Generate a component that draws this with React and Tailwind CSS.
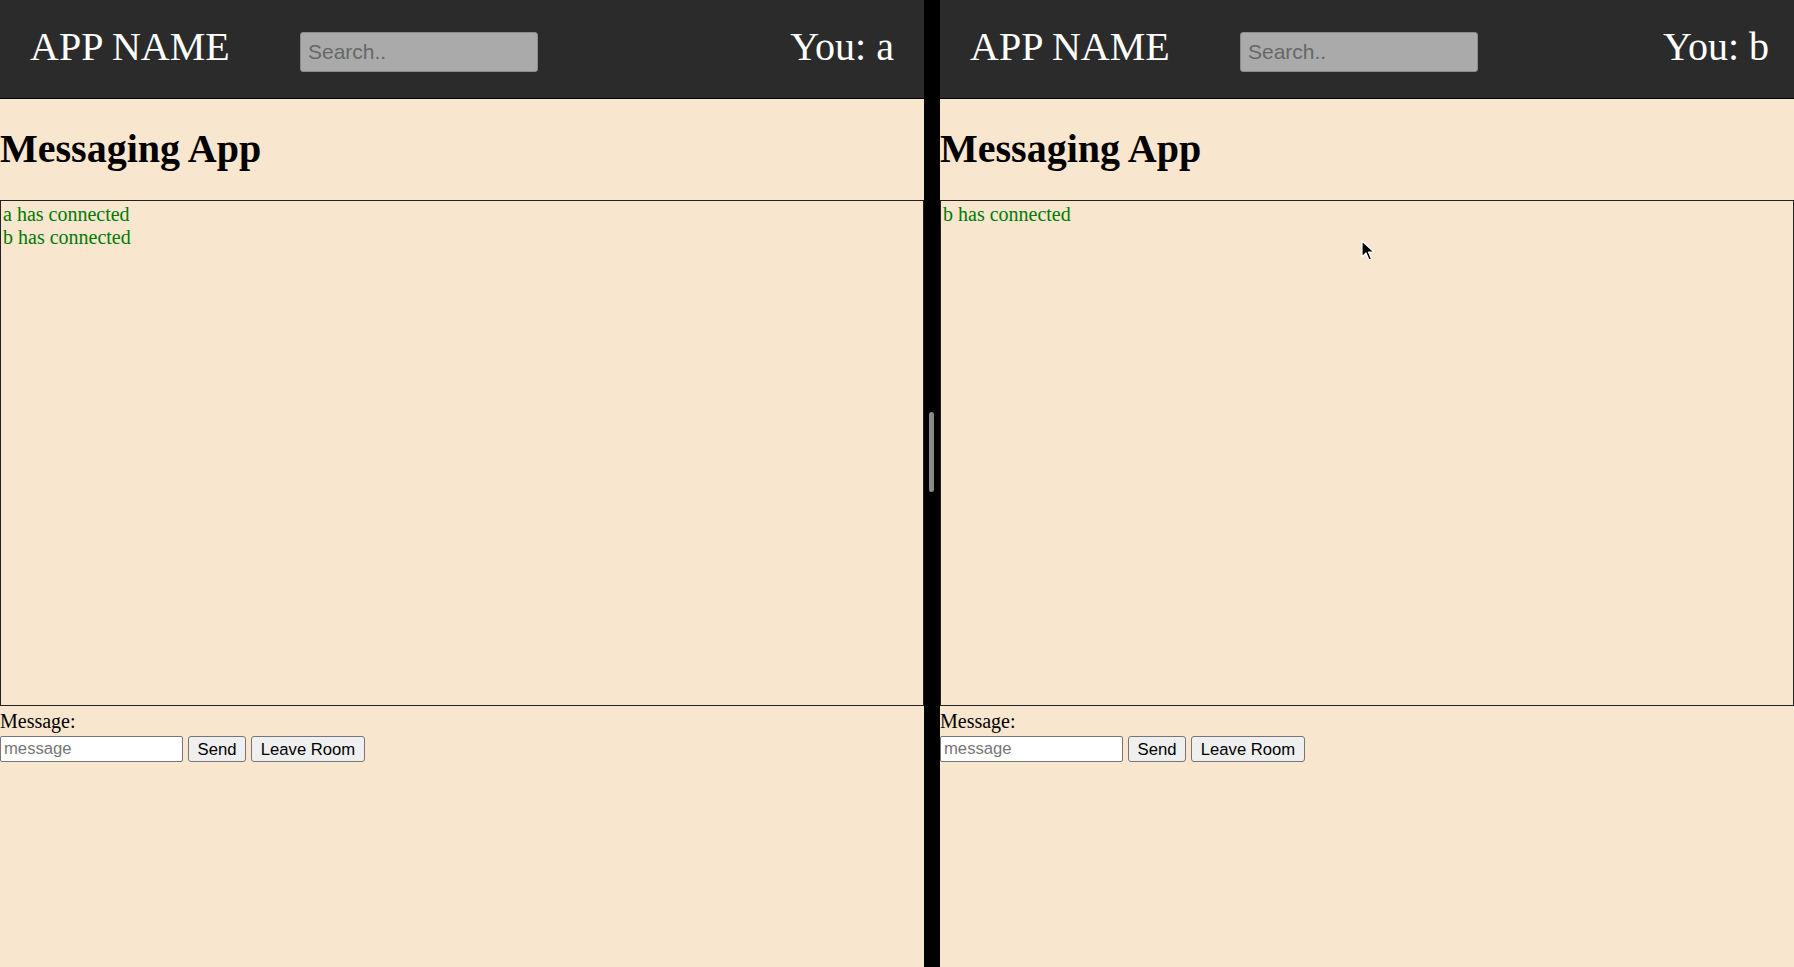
const serif = { fontFamily: '"Liberation Serif", "Times New Roman", serif' };

function Pane({ user, messages, rightPad }) {
  return (
    <div className="flex h-full min-w-0 flex-1 flex-col bg-[#f8e6cf]" style={serif}>
      {/* top bar */}
      <header
        className={`flex h-[99px] shrink-0 items-start border-b border-black bg-[#2b2b2b] pl-[30px] ${rightPad}`}
      >
        <span className="mt-[24px] w-[270px] shrink-0 text-[40px] leading-[46px] whitespace-nowrap text-white">
          APP NAME
        </span>
        <input
          type="text"
          placeholder="Search.."
          className="mt-[32px] h-[40px] w-[238px] rounded-[3px] border border-[#8c8c8c] bg-[#aaaaaa] px-[7px] font-['Liberation_Sans',Arial,sans-serif] text-[21px] text-black outline-none placeholder:text-[#676767]"
        />
        <span className="mt-[24px] ml-auto text-[40px] leading-[46px] whitespace-nowrap text-white">
          You: {user}
        </span>
      </header>

      <h1 className="mt-[27px] mb-[28px] text-[40px] leading-[46px] font-bold text-black whitespace-nowrap">
        Messaging App
      </h1>

      {/* chat log */}
      <div className="h-[506px] border border-[#222] px-[2px] pt-[2px] text-[20px] leading-[23px] text-[#007a00]">
        {messages.map((m) => (
          <div key={m}>{m}</div>
        ))}
      </div>

      {/* message form */}
      <div className="mt-[4px] text-[20px] leading-[23px] text-black">Message:</div>
      <div className="mt-[3px] flex items-center gap-[5px] font-['Liberation_Sans',Arial,sans-serif] text-[16.67px]">
        <input
          type="text"
          placeholder="message"
          className="h-[26px] w-[183px] rounded-[2px] border border-[#767676] bg-white px-[3px] text-black outline-none placeholder:text-[#767676]"
        />
        <button className="h-[26px] w-[58px] rounded-[3px] border border-[#767676] bg-[#efefef] text-black">
          Send
        </button>
        <button className="h-[26px] w-[114px] rounded-[3px] border border-[#767676] bg-[#efefef] text-black">
          Leave Room
        </button>
      </div>
    </div>
  );
}

export default function App() {
  return (
    <div className="relative flex h-[967px] w-[1794px] overflow-hidden bg-[#f8e6cf]">
      <div className="flex h-full w-[924px] shrink-0">
        <Pane user="a" messages={["a has connected", "b has connected"]} rightPad="pr-[30px]" />
      </div>

      {/* split divider with handle */}
      <div className="flex h-full w-[16px] shrink-0 flex-col bg-black pl-[5px]">
        <div className="mt-[412px] h-[80px] w-[5px] rounded-full bg-[#8a8a8a]" />
      </div>

      <div className="flex h-full flex-1">
        <Pane user="b" messages={["b has connected"]} rightPad="pr-[25px]" />
      </div>

      {/* mouse pointer */}
      <svg
        className="absolute left-[1361px] top-[240px]"
        width="14"
        height="22"
        viewBox="0 0 14 22"
      >
        <path
          d="M1 1 L1 17 L5 13 L8 20 L10.5 19 L7.5 12 L13 12 Z"
          fill="#000"
          stroke="#fff"
          strokeWidth="1.2"
          strokeLinejoin="round"
        />
      </svg>
    </div>
  );
}
